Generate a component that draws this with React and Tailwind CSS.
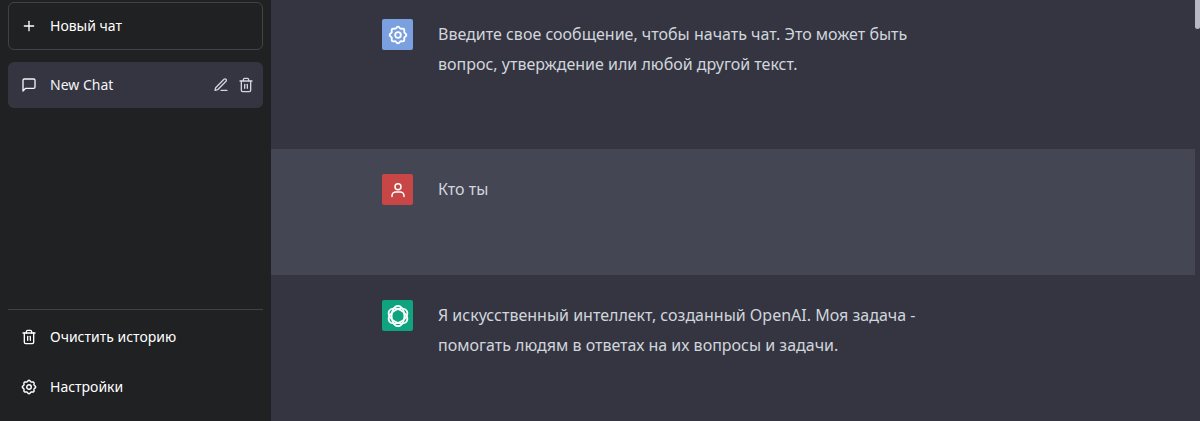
import React from 'react';
import { FiEdit3, FiMessageSquare, FiPlus, FiTrash2 } from 'react-icons/fi';

// Outline of a cog with eight soft teeth, centred in a 24x24 box
const COG_PATH = Array.from({ length: 96 }, (_, i) => {
    const angle = (i / 96) * Math.PI * 2;
    const radius = 9.1 + 0.9 * Math.cos(angle * 8);
    const x = (12 + radius * Math.sin(angle)).toFixed(2);
    const y = (12 - radius * Math.cos(angle)).toFixed(2);
    return `${i === 0 ? 'M' : 'L'}${x} ${y}`;
}).join('') + 'Z';

const CogIcon = ({ className }) => (
    <svg viewBox="0 0 24 24" fill="none" stroke="currentColor" strokeWidth="2.2" strokeLinejoin="round" className={className}>
        <path d={COG_PATH} />
        <circle cx="12" cy="12" r="3.4" />
    </svg>
);

const PersonIcon = ({ className }) => (
    <svg viewBox="0 0 24 24" fill="none" stroke="currentColor" strokeWidth="2" strokeLinecap="round" className={className}>
        <circle cx="12" cy="7.5" r="4" />
        <path d="M4 20.5v-1a5 5 0 0 1 5-5h6a5 5 0 0 1 5 5v1" />
    </svg>
);

const FlowerIcon = ({ className }) => (
    <svg viewBox="0 0 24 24" fill="none" stroke="currentColor" strokeWidth="1.7" className={className}>
        <ellipse cx="12" cy="12" rx="6.4" ry="10.2" />
        <ellipse cx="12" cy="12" rx="6.4" ry="10.2" transform="rotate(60 12 12)" />
        <ellipse cx="12" cy="12" rx="6.4" ry="10.2" transform="rotate(120 12 12)" />
    </svg>
);

const ROLES = {
    system: { color: 'bg-[#7aa0e0]', icon: <CogIcon className="size-5" /> },
    user: { color: 'bg-[#c84646]', icon: <PersonIcon className="size-[18px]" /> },
    assistant: { color: 'bg-[#10a37f]', icon: <FlowerIcon className="size-6" /> },
};

const App = () => {
    return (
        <div className="flex h-screen overflow-hidden bg-[#343541] font-['Noto_Sans','Open_Sans',sans-serif]">
            {/* Sidebar */}
            <aside className="flex w-[271px] shrink-0 flex-col bg-[#202123] px-2 pt-0.5 pb-[9px] text-sm text-white">
                <button className="flex h-12 shrink-0 items-center gap-[13px] rounded-md border border-white/15 px-3 text-left">
                    <FiPlus className="size-4" />
                    Новый чат
                </button>

                <nav className="mt-3 flex-1">
                    <div className="flex h-[46px] items-center rounded-md bg-[#343541] pr-[9px] pl-[13px] text-gray-100">
                        <a href="#chat" className="flex flex-1 items-center gap-[13px]">
                            <FiMessageSquare className="size-4" />
                            New Chat
                        </a>
                        <div className="flex gap-[9px] text-gray-300">
                            <button aria-label="Edit"><FiEdit3 className="size-4" /></button>
                            <button aria-label="Delete"><FiTrash2 className="size-4" /></button>
                        </div>
                    </div>
                </nav>

                <div className="border-t border-white/15 pt-0.5">
                    <MenuButton icon={<FiTrash2 className="size-4" />} label="Очистить историю" />
                    <MenuButton icon={<CogIcon className="size-4" />} label="Настройки" />
                </div>
            </aside>

            {/* Conversation */}
            <main className="min-w-0 flex-1 overflow-hidden">
                <Message role="system" className="pt-[19px]">
                    Введите свое сообщение, чтобы начать чат. Это может быть вопрос, утверждение или любой другой текст.
                </Message>
                <Message role="user" className="bg-[#444654] pt-[25px]">
                    Кто ты
                </Message>
                <Message role="assistant" className="pt-[25px]">
                    Я искусственный интеллект, созданный OpenAI. Моя задача - помогать людям в ответах на их вопросы и задачи.
                </Message>
            </main>

            {/* Scrollbar track */}
            <div className="w-[5px] shrink-0">
                <div className="h-[29px] rounded-b-full bg-[#b8b8c4]"></div>
            </div>
        </div>
    );
};

const MenuButton = ({ icon, label }) => (
    <button className="flex h-[50px] w-full items-center gap-[13px] px-[13px] text-left">
        {icon}
        {label}
    </button>
);

const Message = ({ role, className, children }) => (
    <section className={`${className} pb-[70px]`}>
        <div className="mx-auto flex max-w-[702px] gap-[25px]">
            <div className={`${ROLES[role].color} flex size-[31px] shrink-0 items-center justify-center rounded-xs text-white`}>
                {ROLES[role].icon}
            </div>
            <p className="max-w-[500px] text-base leading-[30px] text-gray-300">{children}</p>
        </div>
    </section>
);

export default App;
